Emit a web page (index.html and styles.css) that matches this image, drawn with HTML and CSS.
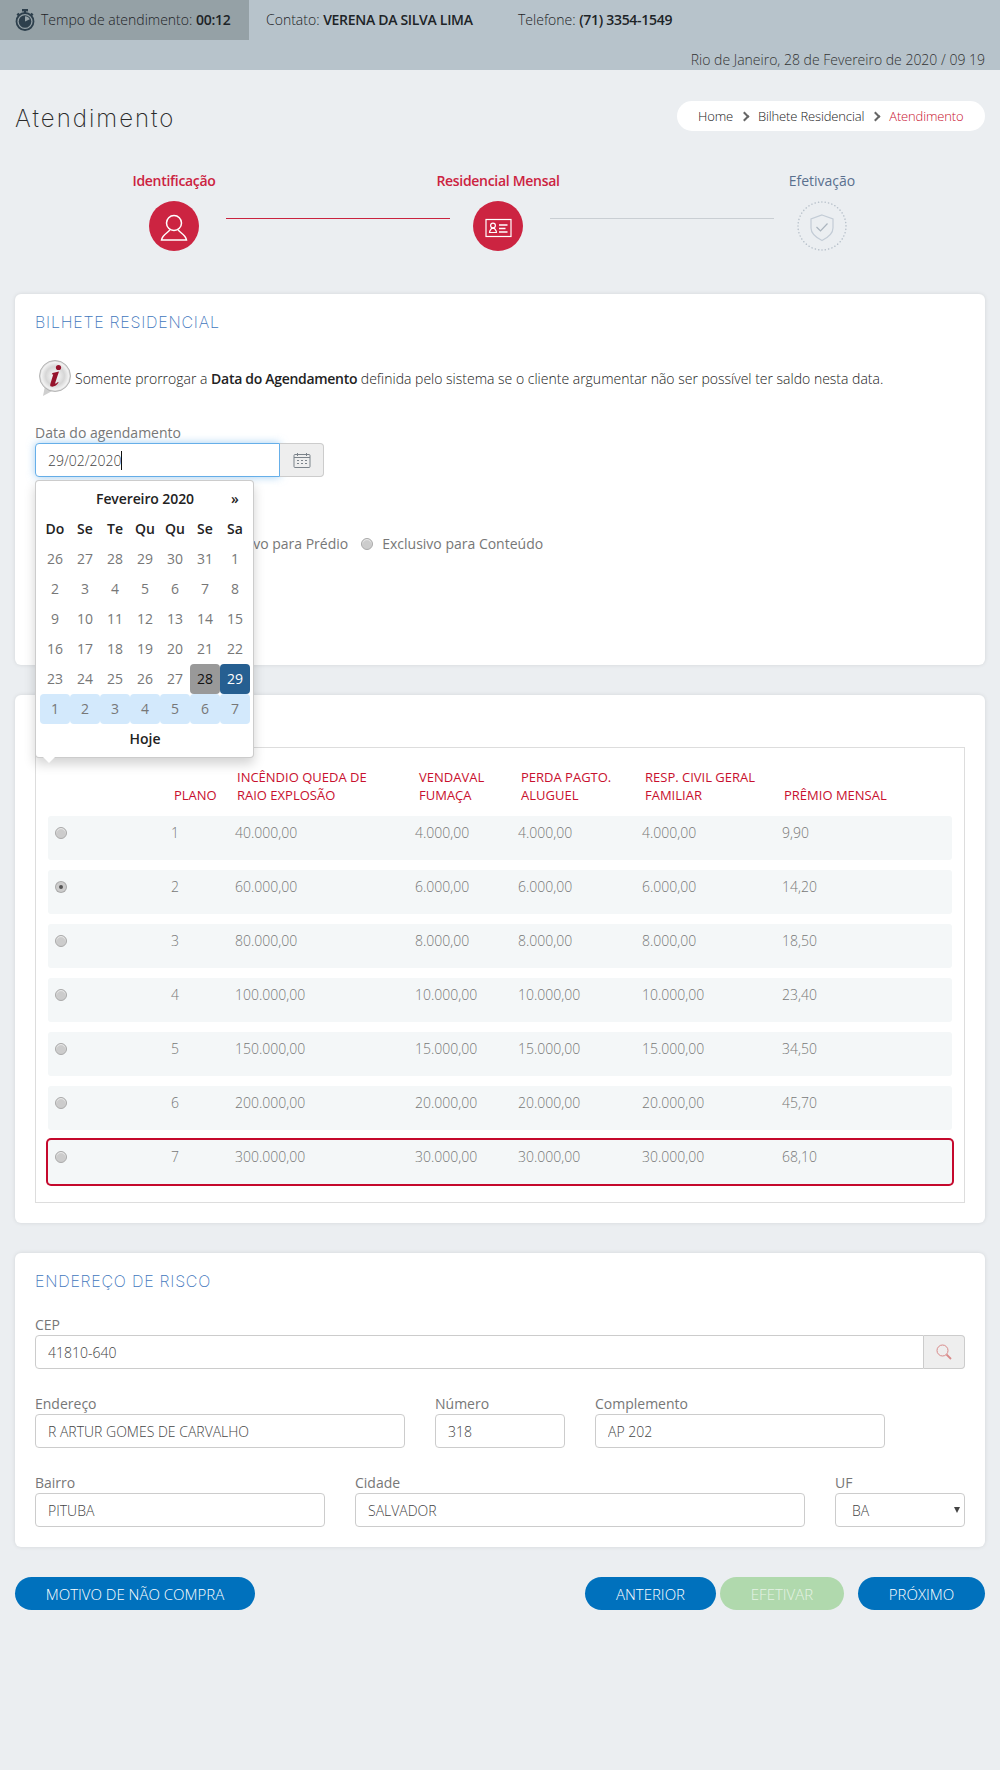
FILE: index.html
```html
<!DOCTYPE html>
<html lang="pt-BR">
<head>
    <meta charset="UTF-8">
    <title>Atendimento</title>
    <link rel="stylesheet" href="styles.css">
</head>
<body>
    <header class="topo">
        <div class="topo-linha">
            <div class="tempo">
                <svg class="tempo-icone" viewBox="0 0 20 22" width="20" height="22">
                    <rect x="7" y="0" width="6" height="2.4" fill="#2d3f4c"/>
                    <rect x="9" y="2" width="2" height="2" fill="#2d3f4c"/>
                    <path d="M1.5 5.5l1.8-1.8 1.4 1.4-1.8 1.8zM18.500 5.500l-1.800-1.800-1.400 1.400 1.800 1.800z" fill="#2d3f4c"/>
                    <circle cx="10" cy="12.500" r="8.500" fill="none" stroke="#2d3f4c" stroke-width="1.800"/>
                    <circle cx="10" cy="12.500" r="6.300" fill="#2d3f4c"/>
                    <path d="M10 12.500V7.200a5.300 5.300 0 0 1 4.800 3z" fill="#95a1a6"/>
                </svg>
                <span>Tempo de atendimento: <b>00:12</b></span>
            </div>
            <div class="contato">Contato: <b>VERENA DA SILVA LIMA</b></div>
            <div class="telefone">Telefone: <b>(71) 3354-1549</b></div>
        </div>
        <div class="topo-data">Rio de Janeiro, 28 de Fevereiro de 2020 / 09 19</div>
    </header>

    <main class="conteudo">
        <div class="titulo-linha">
            <h1>Atendimento</h1>
            <nav class="breadcrumb">
                <span>Home</span>
                <i class="seta"></i>
                <span>Bilhete Residencial</span>
                <i class="seta"></i>
                <span class="atual">Atendimento</span>
            </nav>
        </div>

        <div class="passos">
            <div class="passo passo-1 ativo">
                <span>Identificação</span>
                <div class="bola">
                    <svg viewBox="0 0 50 50" width="50" height="50" fill="none" stroke="#fff" stroke-width="1.500">
                        <circle cx="25" cy="22" r="7.500"/>
                        <path d="M21 28.500c-1 3-7.500 4.500-8.500 10.500h25c-1-6-7.500-7.500-8.500-10.500"/>
                    </svg>
                </div>
            </div>
            <div class="traco ativo"></div>
            <div class="passo passo-2 ativo">
                <span>Residencial Mensal</span>
                <div class="bola">
                    <svg viewBox="0 0 50 50" width="50" height="50" fill="none" stroke="#fff" stroke-width="1.200">
                        <rect x="13" y="18.500" width="25" height="17"/>
                        <circle cx="20" cy="24.500" r="2.400"/>
                        <path d="M16.500 31.500c0-2 1.500-3 2-4h3c.5 1 2 2 2 4z"/>
                        <path d="M26 24h8.500M26 27.500h6.500M26 31h8.500" stroke-width="1.300"/>
                    </svg>
                </div>
            </div>
            <div class="traco"></div>
            <div class="passo passo-3">
                <span>Efetivação</span>
                <div class="bola-vazia">
                    <svg viewBox="0 0 50 50" width="50" height="50" fill="none">
                        <circle cx="25" cy="25" r="24" stroke="#b7c0ca" stroke-width="1.500" stroke-linecap="round" stroke-dasharray="0.100 3.300"/>
                        <path d="M25 14l11 4v9c0 6-5 9.500-11 12.500-6-3-11-6.500-11-12.500v-9z" stroke="#c3ccd6" stroke-width="1.200"/>
                        <path d="M19.500 26l4 4 7-7.500" stroke="#aab4be" stroke-width="1.200"/>
                    </svg>
                </div>
            </div>
        </div>

        <section class="card card-bilhete">
            <h2>BILHETE RESIDENCIAL</h2>
            <div class="aviso">
                <svg class="aviso-icone" viewBox="0 0 34 36" width="34" height="36">
                    <defs>
                        <radialGradient id="discoInfo" cx="50%" cy="50%" r="55%">
                            <stop offset="0" stop-color="#fff"/>
                            <stop offset="0.55" stop-color="#d6d6d6"/>
                            <stop offset="0.8" stop-color="#f2f2f2"/>
                            <stop offset="1" stop-color="#b8b8b8"/>
                        </radialGradient>
                    </defs>
                    <path d="M7 26L5 36l11-6z" fill="#cfcfcf"/>
                    <circle cx="17" cy="16" r="15.500" fill="url(#discoInfo)" stroke="#aaa" stroke-width="0.800"/>
                    <circle cx="20.500" cy="7.500" r="2.600" fill="#96132c"/>
                    <path d="M14.500 13l6.500-1.500-4 12c1 .3 2-.5 3-1.500l.6.6c-2.500 3.500-5 4.400-7.300 4-1.300-.3-1.300-1.500-.9-2.800l2.800-9.300-1.500-.3z" fill="#96132c"/>
                </svg>
                <p>Somente prorrogar a <b>Data do Agendamento</b> definida pelo sistema se o cliente argumentar não ser possível ter saldo nesta data.</p>
            </div>

            <label class="rotulo rotulo-data">Data do agendamento</label>
            <div class="campo-data">
                <input class="entrada entrada-foco" type="text" value="29/02/2020">
                <span class="cursor"></span>
                <span class="addon addon-data">
                    <svg viewBox="0 0 18 16" width="18" height="16" fill="none" stroke="#7b838a" stroke-width="1">
                        <rect x="1" y="2.500" width="16" height="13" rx="1"/>
                        <path d="M1 5.500h16M4.500 1v3M13.500 1v3"/>
                        <path d="M4 8.500h2M8 8.500h2M12 8.500h2M4 11.500h2M8 11.500h2M12 11.500h2" stroke-width="1.200"/>
                    </svg>
                </span>

                <div class="calendario">
                    <div class="cal-linha cal-mes">
                        <div class="cal-cel"></div>
                        <div class="cal-titulo">Fevereiro 2020</div>
                        <div class="cal-cel">»</div>
                    </div>
                    <div class="cal-linha cal-semana">
                        <div class="cal-cel">Do</div><div class="cal-cel">Se</div><div class="cal-cel">Te</div><div class="cal-cel">Qu</div><div class="cal-cel">Qu</div><div class="cal-cel">Se</div><div class="cal-cel">Sa</div>
                    </div>
                    <div class="cal-linha">
                        <div class="cal-cel">26</div><div class="cal-cel">27</div><div class="cal-cel">28</div><div class="cal-cel">29</div><div class="cal-cel">30</div><div class="cal-cel">31</div><div class="cal-cel">1</div>
                    </div>
                    <div class="cal-linha">
                        <div class="cal-cel">2</div><div class="cal-cel">3</div><div class="cal-cel">4</div><div class="cal-cel">5</div><div class="cal-cel">6</div><div class="cal-cel">7</div><div class="cal-cel">8</div>
                    </div>
                    <div class="cal-linha">
                        <div class="cal-cel">9</div><div class="cal-cel">10</div><div class="cal-cel">11</div><div class="cal-cel">12</div><div class="cal-cel">13</div><div class="cal-cel">14</div><div class="cal-cel">15</div>
                    </div>
                    <div class="cal-linha">
                        <div class="cal-cel">16</div><div class="cal-cel">17</div><div class="cal-cel">18</div><div class="cal-cel">19</div><div class="cal-cel">20</div><div class="cal-cel">21</div><div class="cal-cel">22</div>
                    </div>
                    <div class="cal-linha">
                        <div class="cal-cel">23</div><div class="cal-cel">24</div><div class="cal-cel">25</div><div class="cal-cel">26</div><div class="cal-cel">27</div><div class="cal-cel cal-hoje">28</div><div class="cal-cel cal-sel">29</div>
                    </div>
                    <div class="cal-linha cal-proximo">
                        <div class="cal-cel">1</div><div class="cal-cel">2</div><div class="cal-cel">3</div><div class="cal-cel">4</div><div class="cal-cel">5</div><div class="cal-cel">6</div><div class="cal-cel">7</div>
                    </div>
                    <div class="cal-linha cal-rodape">Hoje</div>
                </div>
            </div>

            <div class="opcoes">
                <label class="opcao"><i class="radio"></i>Exclusivo para Prédio</label>
                <label class="opcao"><i class="radio"></i>Exclusivo para Conteúdo</label>
            </div>
        </section>

        <section class="card card-planos">
            <div class="tabela">
                <div class="tabela-cab">
                    <div></div>
                    <div>PLANO</div>
                    <div>INCÊNDIO QUEDA DE<br>RAIO EXPLOSÃO</div>
                    <div>VENDAVAL<br>FUMAÇA</div>
                    <div>PERDA PAGTO.<br>ALUGUEL</div>
                    <div>RESP. CIVIL GERAL<br>FAMILIAR</div>
                    <div>PRÊMIO MENSAL</div>
                </div>
                <div class="plano">
                    <i class="radio"></i><div>1</div><div>40.000,00</div><div>4.000,00</div><div>4.000,00</div><div>4.000,00</div><div>9,90</div>
                </div>
                <div class="plano">
                    <i class="radio radio-marcado"></i><div>2</div><div>60.000,00</div><div>6.000,00</div><div>6.000,00</div><div>6.000,00</div><div>14,20</div>
                </div>
                <div class="plano">
                    <i class="radio"></i><div>3</div><div>80.000,00</div><div>8.000,00</div><div>8.000,00</div><div>8.000,00</div><div>18,50</div>
                </div>
                <div class="plano">
                    <i class="radio"></i><div>4</div><div>100.000,00</div><div>10.000,00</div><div>10.000,00</div><div>10.000,00</div><div>23,40</div>
                </div>
                <div class="plano">
                    <i class="radio"></i><div>5</div><div>150.000,00</div><div>15.000,00</div><div>15.000,00</div><div>15.000,00</div><div>34,50</div>
                </div>
                <div class="plano">
                    <i class="radio"></i><div>6</div><div>200.000,00</div><div>20.000,00</div><div>20.000,00</div><div>20.000,00</div><div>45,70</div>
                </div>
                <div class="plano plano-destaque">
                    <i class="radio"></i><div>7</div><div>300.000,00</div><div>30.000,00</div><div>30.000,00</div><div>30.000,00</div><div>68,10</div>
                </div>
            </div>
        </section>

        <section class="card">
            <h2>ENDEREÇO DE RISCO</h2>
            <div class="linha-form linha-cep">
                <div class="campo campo-cheio">
                    <label class="rotulo">CEP</label>
                    <div class="grupo">
                        <input class="entrada entrada-grupo" type="text" value="41810-640">
                        <span class="addon addon-busca">
                            <svg viewBox="0 0 16 16" width="16" height="16" fill="none" stroke="#d98a8a" stroke-width="1">
                                <circle cx="6.500" cy="6.500" r="5.500"/>
                                <path d="M10.500 10.500l4.500 4.500" stroke-width="1.800"/>
                            </svg>
                        </span>
                    </div>
                </div>
            </div>
            <div class="linha-form">
                <div class="campo campo-endereco">
                    <label class="rotulo">Endereço</label>
                    <input class="entrada" type="text" value="R ARTUR GOMES DE CARVALHO">
                </div>
                <div class="campo campo-numero">
                    <label class="rotulo">Número</label>
                    <input class="entrada" type="text" value="318">
                </div>
                <div class="campo campo-compl">
                    <label class="rotulo">Complemento</label>
                    <input class="entrada" type="text" value="AP 202">
                </div>
            </div>
            <div class="linha-form">
                <div class="campo campo-bairro">
                    <label class="rotulo">Bairro</label>
                    <input class="entrada" type="text" value="PITUBA">
                </div>
                <div class="campo campo-cidade">
                    <label class="rotulo">Cidade</label>
                    <input class="entrada" type="text" value="SALVADOR">
                </div>
                <div class="campo campo-uf">
                    <label class="rotulo">UF</label>
                    <div class="select-uf">
                        <select class="entrada entrada-select">
                            <option>BA</option>
                        </select>
                    </div>
                </div>
            </div>
        </section>

        <div class="acoes">
            <button class="botao botao-motivo">MOTIVO DE NÃO COMPRA</button>
            <div class="acoes-dir">
                <button class="botao botao-anterior">ANTERIOR</button>
                <button class="botao botao-efetivar">EFETIVAR</button>
                <button class="botao botao-proximo">PRÓXIMO</button>
            </div>
        </div>
    </main>
</body>
</html>
```

FILE: styles.css
```css
* {
    box-sizing: border-box;
}
body {
    font-family: "Open Sans", Arial, sans-serif;
    font-size: 14px;
    margin: 0;
    min-height: 1770px;
    background-color: #ebeef1;
    color: #333;
}
b {
    font-weight: 600;
    letter-spacing: -0.3px;
}

/* topo */
.topo {
    height: 70px;
    background-color: #b7c3cb;
}
.topo-linha {
    display: flex;
    height: 40px;
    line-height: 40px;
    font-weight: 300;
    color: #1d2327;
}
.tempo {
    display: flex;
    align-items: center;
    gap: 6px;
    width: 249px;
    padding-left: 15px;
    background-color: #95a1a6;
}
.contato {
    margin-left: 17px;
    width: 252px;
}
.topo-data {
    height: 30px;
    line-height: 40px;
    padding-right: 15px;
    text-align: right;
    font-weight: 300;
    color: #333;
}

.conteudo {
    padding: 0 15px;
}

/* titulo */
.titulo-linha {
    display: flex;
    justify-content: space-between;
    align-items: center;
    margin-top: 31px;
    height: 30px;
}
h1 {
    margin: 0;
    padding-top: 4px;
    font-family: Inter, Arial, sans-serif;
    font-size: 24px;
    font-weight: 200;
    letter-spacing: 2px;
    color: #2a2a2a;
}
.breadcrumb {
    display: flex;
    align-items: center;
    width: 308px;
    height: 30px;
    padding-left: 21px;
    background-color: #fff;
    border-radius: 15px;
    font-size: 13px;
    font-weight: 300;
    letter-spacing: -0.15px;
    color: #222;
}
.seta {
    width: 7px;
    height: 7px;
    margin: 0 10px 0 8px;
    border-top: 2px solid #666;
    border-right: 2px solid #666;
    transform: rotate(45deg);
}
.atual {
    color: #c8102e;
}

/* passos */
.passos {
    display: flex;
    align-items: flex-start;
    margin-top: 40px;
    padding-left: 107px;
    height: 80px;
}
.passo {
    display: flex;
    flex-direction: column;
    align-items: center;
    gap: 10px;
    line-height: 20px;
    white-space: nowrap;
    color: #5a708f;
}
.passo-1 {
    width: 104px;
}
.passo-2 {
    width: 96px;
}
.passo-3 {
    width: 96px;
}
.passo.ativo {
    color: #cc2240;
    font-weight: 600;
    letter-spacing: -0.3px;
}
.bola {
    width: 50px;
    height: 50px;
    border-radius: 50%;
    background-color: #cc2441;
}
.bola svg,
.bola-vazia svg {
    display: block;
}
.bola-vazia {
    width: 50px;
    height: 50px;
}
.traco {
    width: 224px;
    height: 1px;
    margin-top: 47px;
    background-color: #c9ced3;
}
.traco.ativo {
    background-color: #c9233f;
}
.passo-2 + .traco {
    margin-left: 4px;
}

/* cards */
.card {
    margin-top: 30px;
    padding: 18px 20px 20px;
    background-color: #fff;
    border-radius: 6px;
    box-shadow: 0 0 4px rgba(0, 0, 0, 0.1);
}
.card-bilhete {
    margin-top: 43px;
    padding-bottom: 111px;
}
.card-planos {
    padding-top: 52px;
}
h2 {
    margin: 0;
    font-family: Inter, Arial, sans-serif;
    font-size: 16px;
    font-weight: 200;
    letter-spacing: 0.75px;
    line-height: 20px;
    color: #3f77bd;
}
.aviso {
    display: flex;
    align-items: center;
    gap: 3px;
    margin-top: 28px;
    padding-left: 3px;
    height: 36px;
}
.aviso p {
    margin: 0;
    font-weight: 300;
    color: #222;
}
.rotulo {
    display: block;
    line-height: 20px;
    color: #777;
}
.rotulo-data {
    margin-top: 27px;
}

/* campos */
.entrada {
    display: block;
    width: 100%;
    height: 34px;
    padding: 0 12px;
    border: 1px solid #ccc;
    border-radius: 4px;
    background-color: #fff;
    font-family: inherit;
    font-size: 14px;
    font-weight: 300;
    color: #444;
}
.entrada-foco {
    width: 245px;
    border-color: #66afe9;
    border-radius: 4px 0 0 4px;
    box-shadow: 0 0 8px rgba(102, 175, 233, 0.6);
}
.campo-data {
    position: relative;
    display: flex;
    width: 289px;
}
.cursor {
    position: absolute;
    left: 86px;
    top: 8px;
    width: 1px;
    height: 19px;
    background-color: #111;
}
.addon {
    display: flex;
    align-items: center;
    justify-content: center;
    height: 34px;
    background-color: #eee;
    border: 1px solid #ccc;
    border-left: none;
    border-radius: 0 4px 4px 0;
}
.addon-data {
    width: 44px;
}
.addon-busca {
    width: 41px;
    flex: none;
}
.grupo {
    display: flex;
}
.entrada-grupo {
    flex: 1;
    border-radius: 4px 0 0 4px;
}
.opcoes {
    display: flex;
    gap: 13px;
    margin-top: 57px;
    padding-left: 153px;
    height: 20px;
}
.opcao {
    display: flex;
    align-items: center;
    gap: 9px;
    line-height: 20px;
    color: #777;
}
.radio {
    display: block;
    flex: none;
    width: 12px;
    height: 12px;
    border-radius: 50%;
    background-color: #ccc;
    border: 1px solid #aaa;
    box-shadow: inset 0 1px 1px rgba(255, 255, 255, 0.7);
}
.radio-marcado {
    background-color: #555;
    border: 3px solid #ccc;
    box-shadow: 0 0 0 1px #aaa;
    width: 10px;
    height: 10px;
    margin: 1px 0 0 1px;
}

/* calendario */
.calendario {
    position: absolute;
    z-index: 10;
    left: 0;
    top: 37px;
    width: 219px;
    height: 278px;
    padding: 3px 3px 3px 4px;
    background-color: #fff;
    border: 1px solid rgba(0, 0, 0, 0.2);
    border-radius: 4px;
    box-shadow: 0 6px 12px rgba(0, 0, 0, 0.175);
}
.calendario::after {
    content: "";
    position: absolute;
    left: 7px;
    bottom: -6px;
    border-top: 6px solid #fff;
    border-left: 6px solid transparent;
    border-right: 6px solid transparent;
}
.cal-linha {
    display: flex;
    height: 30px;
    line-height: 30px;
    text-align: center;
    color: #777;
}
.cal-cel {
    width: 30px;
    border-radius: 4px;
}
.cal-mes,
.cal-semana,
.cal-rodape {
    color: #222;
    font-weight: 600;
}
.cal-titulo {
    width: 150px;
    letter-spacing: -0.1px;
}
.cal-hoje {
    background-color: #999;
    color: #111;
}
.cal-sel {
    background-color: #265f91;
    color: #fff;
}
.cal-proximo .cal-cel {
    background-color: #d3e9fc;
}
.cal-rodape {
    display: block;
}

/* tabela de planos */
.tabela {
    padding: 20px 12px 18px;
    border: 1px solid #ddd;
}
.tabela-cab {
    display: grid;
    grid-template-columns: 126px 63px 182px 102px 124px 139px 1fr;
    align-items: end;
    font-size: 13px;
    line-height: 18px;
    color: #c8102e;
}
.plano {
    display: grid;
    grid-template-columns: 123px 64px 180px 103px 124px 140px 1fr;
    align-items: start;
    height: 44px;
    margin-top: 10px;
    padding-top: 8px;
    background-color: #f4f7f8;
    border-radius: 3px;
    font-weight: 300;
    line-height: 18px;
    color: #777;
}
.tabela-cab + .plano {
    margin-top: 12px;
}
.plano .radio {
    margin: 3px 0 0 7px;
}
.plano .radio-marcado {
    margin: 4px 0 0 8px;
}
.plano-destaque {
    box-shadow: 0 0 0 2px #c5092d;
}

/* formulario */
.linha-form {
    display: flex;
    gap: 30px;
    margin-top: 25px;
}
.linha-cep {
    margin-top: 24px;
}
.campo-cheio {
    width: 100%;
}
.campo-endereco {
    width: 370px;
}
.campo-numero {
    width: 130px;
}
.campo-compl {
    width: 290px;
}
.campo-bairro {
    width: 290px;
}
.campo-cidade {
    width: 450px;
}
.campo-uf {
    width: 130px;
}
.select-uf {
    position: relative;
}
.select-uf::after {
    content: "";
    position: absolute;
    right: 5px;
    top: 14px;
    border-top: 6px solid #444;
    border-left: 3px solid transparent;
    border-right: 3px solid transparent;
}
.entrada-select {
    appearance: none;
    padding-left: 16px;
}

/* botoes */
.acoes {
    display: flex;
    justify-content: space-between;
    margin-top: 30px;
}
.acoes-dir {
    display: flex;
}
.botao {
    height: 33px;
    border: none;
    border-radius: 17px;
    background-color: #0071bd;
    color: #fff;
    font-family: inherit;
    font-size: 15px;
    font-weight: 300;
}
.botao-motivo {
    width: 240px;
}
.botao-anterior {
    width: 131px;
}
.botao-efetivar {
    width: 124px;
    margin-left: 4px;
    background-color: #b0d9ad;
    color: #e6f3e5;
}
.botao-proximo {
    width: 127px;
    margin-left: 14px;
}
```
